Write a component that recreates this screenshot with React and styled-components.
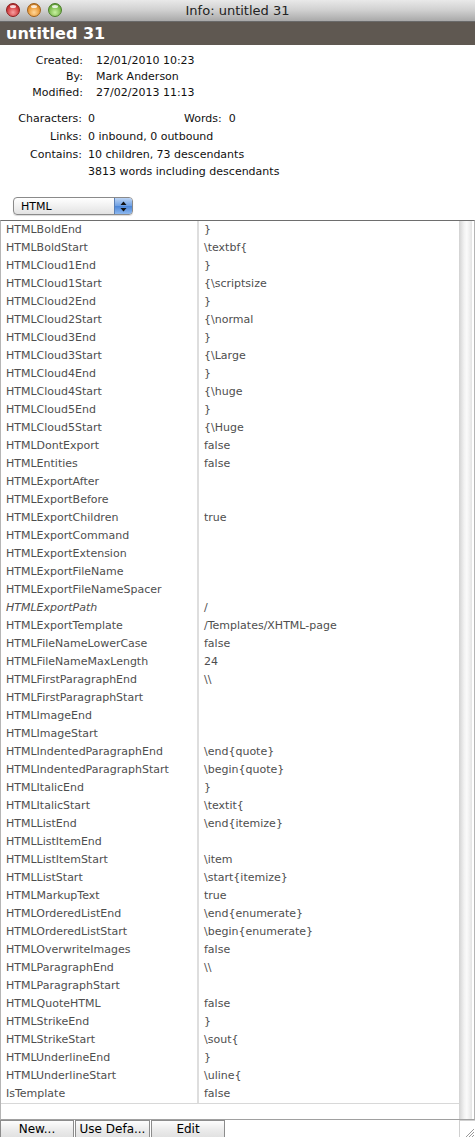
import React from "react";
import styled, { createGlobalStyle } from "styled-components";

const Global = createGlobalStyle`
  html, body { margin: 0; padding: 0; background: #fff; }
  body { font-family: "Lucida Grande", "DejaVu Sans", sans-serif; }
`;

const rows = [
  ["HTMLBoldEnd", "}"],
  ["HTMLBoldStart", "\\textbf{"],
  ["HTMLCloud1End", "}"],
  ["HTMLCloud1Start", "{\\scriptsize"],
  ["HTMLCloud2End", "}"],
  ["HTMLCloud2Start", "{\\normal"],
  ["HTMLCloud3End", "}"],
  ["HTMLCloud3Start", "{\\Large"],
  ["HTMLCloud4End", "}"],
  ["HTMLCloud4Start", "{\\huge"],
  ["HTMLCloud5End", "}"],
  ["HTMLCloud5Start", "{\\Huge"],
  ["HTMLDontExport", "false"],
  ["HTMLEntities", "false"],
  ["HTMLExportAfter", ""],
  ["HTMLExportBefore", ""],
  ["HTMLExportChildren", "true"],
  ["HTMLExportCommand", ""],
  ["HTMLExportExtension", ""],
  ["HTMLExportFileName", ""],
  ["HTMLExportFileNameSpacer", ""],
  ["HTMLExportPath", "/", true],
  ["HTMLExportTemplate", "/Templates/XHTML-page"],
  ["HTMLFileNameLowerCase", "false"],
  ["HTMLFileNameMaxLength", "24"],
  ["HTMLFirstParagraphEnd", "\\\\"],
  ["HTMLFirstParagraphStart", ""],
  ["HTMLImageEnd", ""],
  ["HTMLImageStart", ""],
  ["HTMLIndentedParagraphEnd", "\\end{quote}"],
  ["HTMLIndentedParagraphStart", "\\begin{quote}"],
  ["HTMLItalicEnd", "}"],
  ["HTMLItalicStart", "\\textit{"],
  ["HTMLListEnd", "\\end{itemize}"],
  ["HTMLListItemEnd", ""],
  ["HTMLListItemStart", "\\item"],
  ["HTMLListStart", "\\start{itemize}"],
  ["HTMLMarkupText", "true"],
  ["HTMLOrderedListEnd", "\\end{enumerate}"],
  ["HTMLOrderedListStart", "\\begin{enumerate}"],
  ["HTMLOverwriteImages", "false"],
  ["HTMLParagraphEnd", "\\\\"],
  ["HTMLParagraphStart", ""],
  ["HTMLQuoteHTML", "false"],
  ["HTMLStrikeEnd", "}"],
  ["HTMLStrikeStart", "\\sout{"],
  ["HTMLUnderlineEnd", "}"],
  ["HTMLUnderlineStart", "\\uline{"],
  ["IsTemplate", "false"],
];

const Window = styled.div`
  width: 475px;
  height: 1137px;
  display: flex;
  flex-direction: column;
  overflow: hidden;
  background: #fff;
`;

const TitleBar = styled.div`
  height: 22px;
  flex: none;
  position: relative;
  display: flex;
  align-items: center;
  justify-content: center;
  background: linear-gradient(#e9e9e9, #cfcfcf 50%, #a9a9a9);
  border-bottom: 1px solid #6a6a6a;
  box-sizing: border-box;
  font-size: 13px;
  color: #222;
`;

const Lights = styled.div`
  position: absolute;
  left: 6px;
  top: 3px;
  display: flex;
  gap: 7px;
`;

const Light = styled.span`
  width: 14px;
  height: 14px;
  border-radius: 50%;
  box-sizing: border-box;
  border: 1px solid ${(p) => p.$edge};
  background: radial-gradient(circle at 50% 70%, ${(p) => p.$hi} 0%, ${(p) => p.$c} 60%, ${(p) => p.$edge} 100%);
  position: relative;
  &::after {
    content: "";
    position: absolute;
    left: 3px;
    top: 1px;
    width: 6px;
    height: 3px;
    border-radius: 50%;
    background: rgba(255, 255, 255, 0.8);
  }
`;

const Band = styled.div`
  height: 23px;
  flex: none;
  background: #5f5851;
  color: #fff;
  font-weight: bold;
  font-size: 16px;
  line-height: 23px;
  padding-left: 6px;
`;

const Info = styled.div`
  flex: none;
  padding-top: 7px;
  font-size: 11px;
  color: #111;
`;

const TopGrid = styled.div`
  display: grid;
  grid-template-columns: 83px auto;
  column-gap: 13px;
  grid-auto-rows: 16px;
  align-items: center;
`;

const Label = styled.div`
  text-align: right;
`;

const LowGrid = styled.div`
  margin-top: 9px;
  display: grid;
  grid-template-columns: 82px auto;
  column-gap: 6px;
  grid-auto-rows: 18px;
  align-items: center;
`;

const Split = styled.div`
  display: flex;
`;

const Cell = styled.span`
  width: ${(p) => p.$w || "auto"};
`;

const Extra = styled.div`
  grid-column: 2;
  height: 22px;
  line-height: 22px;
`;

const PopupRow = styled.div`
  flex: none;
  padding: 16px 0 5px 13px;
`;

const Popup = styled.div`
  width: 120px;
  height: 18px;
  box-sizing: border-box;
  border: 1px solid #8a8a8a;
  border-radius: 4px;
  background: linear-gradient(#ffffff, #f1f1f1 50%, #e2e2e2);
  display: flex;
  align-items: center;
  font-size: 11px;
  color: #000;
  overflow: hidden;
  box-shadow: 0 1px 1px rgba(0, 0, 0, 0.15);
`;

const PopupText = styled.span`
  flex: 1;
  padding-left: 7px;
`;

const Stepper = styled.span`
  width: 17px;
  height: 100%;
  background: linear-gradient(#bcd4f4, #6d9fe3 50%, #4c86d8 51%, #8db8ef);
  border-left: 1px solid #5a7fb4;
  display: flex;
  align-items: center;
  justify-content: center;
`;

const Table = styled.div`
  flex: none;
  height: 900px;
  box-sizing: border-box;
  border-top: 1px solid #6e6e6e;
  border-left: 1px solid #b5b5b5;
  border-right: 1px solid #b5b5b5;
  border-bottom: 1px solid #a0a0a0;
  display: flex;
`;

const Rows = styled.div`
  flex: 1;
  display: flex;
  flex-direction: column;
`;

const List = styled.div`
  border-bottom: 1px solid #d8d8d8;
`;

const Row = styled.div`
  height: 18px;
  display: grid;
  grid-template-columns: 198px 1fr;
  font-size: 11px;
  color: #4e4e4e;
  line-height: 18px;
`;

const Name = styled.div`
  padding-left: 5px;
  border-right: 2px solid #dedede;
  font-style: ${(p) => (p.$italic ? "italic" : "normal")};
  white-space: nowrap;
`;

const Value = styled.div`
  padding-left: 5px;
  white-space: nowrap;
`;

const Scroll = styled.div`
  width: 13px;
  margin-right: 2px;
  background: linear-gradient(90deg, #d2d2d2, #f2f2f2 40%, #fafafa 60%, #e4e4e4);
`;

const Footer = styled.div`
  flex: 1;
  display: flex;
  align-items: stretch;
`;

const Btn = styled.div`
  width: ${(p) => p.$w}px;
  box-sizing: border-box;
  border: 1px solid #8c8c8c;
  border-bottom: none;
  margin-right: 1px;
  background: linear-gradient(#fdfdfd, #ececec 50%, #e0e0e0);
  font-size: 12px;
  color: #000;
  text-align: center;
  line-height: 17px;
  white-space: nowrap;
`;

const Grip = styled.div`
  margin-left: auto;
  width: 15px;
  display: flex;
  align-items: flex-end;
  justify-content: flex-end;
  border-left: 1px solid #d0d0d0;
  border-top: 1px solid #d0d0d0;
`;

const App = () => {
  return (
    <>
      <Global />
      <Window>
        <TitleBar>
          <Lights>
            <Light $c="#d0373a" $hi="#f7a0a0" $edge="#8a1e1e" />
            <Light $c="#e89530" $hi="#ffd79a" $edge="#a0601a" />
            <Light $c="#79b84a" $hi="#c8f0a0" $edge="#4a7e28" />
          </Lights>
          Info: untitled 31
        </TitleBar>
        <Band>untitled 31</Band>
        <Info>
          <TopGrid>
            <Label>Created:</Label>
            <div>12/01/2010 10:23</div>
            <Label>By:</Label>
            <div>Mark Anderson</div>
            <Label>Modified:</Label>
            <div>27/02/2013 11:13</div>
          </TopGrid>
          <LowGrid>
            <Label>Characters:</Label>
            <Split>
              <Cell $w="96px">0</Cell>
              <Cell>Words:&nbsp; 0</Cell>
            </Split>
            <Label>Links:</Label>
            <div>0 inbound, 0 outbound</div>
            <Label>Contains:</Label>
            <div>10 children, 73 descendants</div>
            <Extra>3813 words including descendants</Extra>
          </LowGrid>
        </Info>
        <PopupRow>
          <Popup>
            <PopupText>HTML</PopupText>
            <Stepper>
              <svg width="7" height="11" viewBox="0 0 7 11">
                <path d="M3.5 0.5 L6.5 4 H0.5 Z" fill="#111" />
                <path d="M3.5 10.5 L6.5 7 H0.5 Z" fill="#111" />
              </svg>
            </Stepper>
          </Popup>
        </PopupRow>
        <Table>
          <Rows>
            <List>
              {rows.map(([k, v, it]) => (
                <Row key={k}>
                  <Name $italic={it}>{k}</Name>
                  <Value>{v}</Value>
                </Row>
              ))}
            </List>
          </Rows>
          <Scroll />
        </Table>
        <Footer>
          <Btn $w={74}>New...</Btn>
          <Btn $w={75}>Use Defa...</Btn>
          <Btn $w={74}>Edit</Btn>
          <Grip>
            <svg width="12" height="12" viewBox="0 0 12 12">
              <path d="M11 3 L3 11 M11 6 L6 11 M11 9 L9 11" stroke="#999" strokeWidth="1" />
            </svg>
          </Grip>
        </Footer>
      </Window>
    </>
  );
};

export default App;
